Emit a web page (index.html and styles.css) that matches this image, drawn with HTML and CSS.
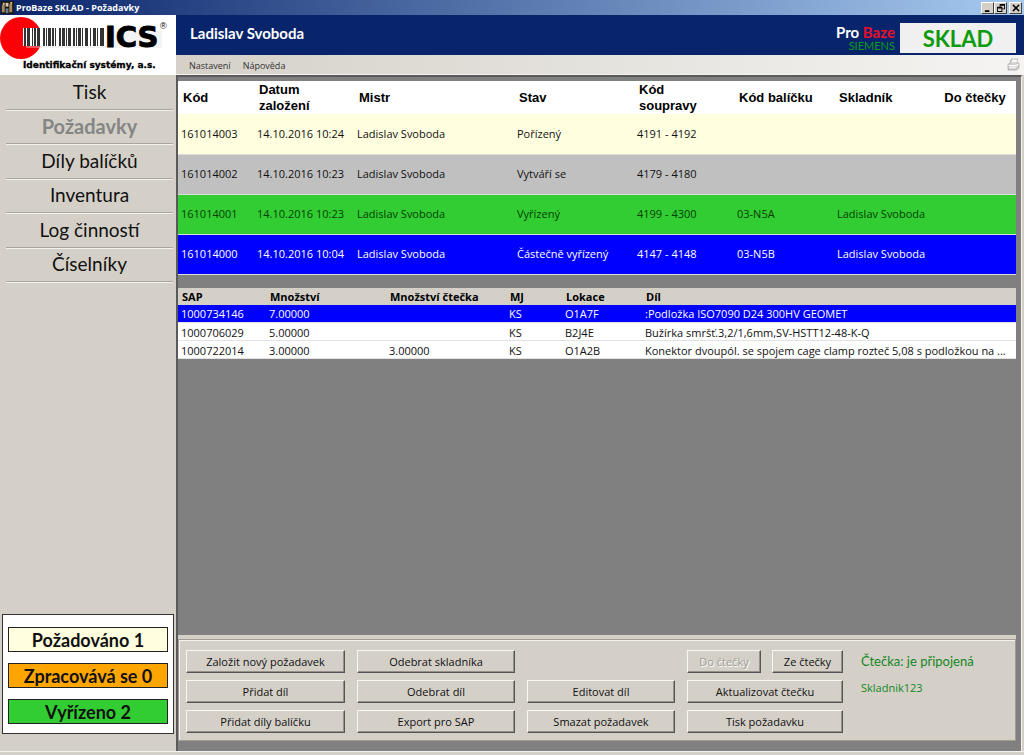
FILE: index.html
```html
<!DOCTYPE html>
<html lang="cs">
<head>
<meta charset="utf-8">
<title>ProBaze SKLAD - Požadavky</title>
<link rel="stylesheet" href="styles.css">
</head>
<body>
<div class="window">
  <header class="titlebar">
    <svg class="app-icon" viewBox="0 0 14 14" aria-hidden="true"><path fill="#1c1a18" d="M0 0h14v14H0z"/><path fill="#a98b5c" d="M1 4h3v8H1zM9 3h3v9H9z"/><path fill="#d8d0bc" d="M5 2h3v4H5z"/><path fill="#6a7d92" d="M5 8h3v5H5z"/><path fill="#e5c98b" d="M2 2h2v2H2zM10 1h2v2h-2z"/></svg>
    <h1 class="window-title">ProBaze SKLAD - Požadavky</h1>
    <div class="window-controls">
      <button class="win-btn" aria-label="Minimalizovat"><svg viewBox="0 0 9 9"><path d="M1 7h5v2H1z"/></svg></button>
      <button class="win-btn" aria-label="Obnovit"><svg viewBox="0 0 9 9"><path d="M3 0h6v6H6v3H0V3h3zM4 2v1h2v2h2V2zM1 5v3h4V5z" fill-rule="evenodd"/></svg></button>
      <button class="win-btn win-close" aria-label="Zavřít"><svg viewBox="0 0 9 9"><path d="M1 1l7 7M8 1L1 8" stroke="#000" stroke-width="1.7"/></svg></button>
    </div>
  </header>
  <div class="frame">
    <aside class="sidebar">
      <div class="logo">
        <svg viewBox="0 0 176 60" role="img" aria-label="ICS Identifikační systémy, a.s.">
          <circle cx="21" cy="23" r="21" fill="#fb0007"/>
          <path d="M26 16h136v17H26z" fill="#e2e2e2" opacity=".4"/>
          <path d="M23 13h84v18H23z" fill="#fff"/>
          <g fill="#333">
            <path d="M24 13h2v18h-2zM27 13h3v18h-3zM32 13h1v18h-1zM34 13h2v18h-2zM37 13h3v18h-3zM43 13h2v18h-2zM46 13h1v18h-1zM48 13h3v18h-3zM52 13h2v18h-2zM55 13h1v18h-1zM59 13h2v18h-2zM62 13h3v18h-3zM66 13h1v18h-1zM68 13h3v18h-3zM73 13h2v18h-2zM76 13h1v18h-1zM78 13h3v18h-3zM82 13h1v18h-1zM85 13h3v18h-3zM90 13h1v18h-1zM93 13h3v18h-3z"/>
            <path d="M97 13h1v18h-1zM100 13h4v18h-4z"/>
          </g>
          <text class="logo-mark" x="105" y="32">ICS</text>
          <text class="logo-name" x="23" y="53">Identifikační systémy, a.s.</text>
          <text class="logo-reg" x="160" y="14">®</text>
        </svg>
      </div>
      <nav class="nav">
        <a href="#">Tisk</a>
        <a href="#" class="current" aria-current="page">Požadavky</a>
        <a href="#">Díly balíčků</a>
        <a href="#">Inventura</a>
        <a href="#">Log činností</a>
        <a href="#">Číselníky</a>
      </nav>
      <div class="counters">
        <div class="counter requested">Požadováno 1</div>
        <div class="counter processing">Zpracovává se 0</div>
        <div class="counter done">Vyřízeno 2</div>
      </div>
    </aside>
    <main class="main">
      <div class="banner">
        <h2 class="user">Ladislav Svoboda</h2>
        <div class="brand"><div class="brand-name">Pro <span class="red">Baze</span></div><div class="brand-sub">SIEMENS</div></div>
        <div class="module">SKLAD</div>
      </div>
      <div class="menubar">
        <button class="menu">Nastavení</button>
        <button class="menu">Nápověda</button>
        <button class="print" aria-label="Tisk"><svg viewBox="0 0 12 12"><path d="M1 6l2-2 1-3h6l-1 3 2 1v4l-2 2H1z" fill="#cfcfcf" stroke="#a6a6a6" stroke-width=".8"/><path d="M4 4h5l.8-2.600H5z" fill="#f8f8f8"/><path d="M1.500 7h7l2-1.500M2 9h6" stroke="#fff" fill="none"/></svg></button>
      </div>
      <div class="workspace">
        <table class="orders">
          <colgroup><col class="w76"><col class="w100"><col class="w160"><col class="w120"><col class="w100"><col class="w100"><col class="w100"><col></colgroup>
          <thead><tr><th>Kód</th><th>Datum<br>založení</th><th>Mistr</th><th>Stav</th><th>Kód<br>soupravy</th><th>Kód balíčku</th><th>Skladník</th><th class="center">Do čtečky</th></tr></thead>
          <tbody>
            <tr class="row-new"><td>161014003</td><td>14.10.2016 10:24</td><td>Ladislav Svoboda</td><td>Pořízený</td><td>4191 - 4192</td><td></td><td></td><td></td></tr>
            <tr class="row-draft"><td>161014002</td><td>14.10.2016 10:23</td><td>Ladislav Svoboda</td><td>Vytváří se</td><td>4179 - 4180</td><td></td><td></td><td></td></tr>
            <tr class="row-done"><td>161014001</td><td>14.10.2016 10:23</td><td>Ladislav Svoboda</td><td>Vyřízený</td><td>4199 - 4300</td><td>03-N5A</td><td>Ladislav Svoboda</td><td></td></tr>
            <tr class="row-selected"><td>161014000</td><td>14.10.2016 10:04</td><td>Ladislav Svoboda</td><td>Částečně vyřízený</td><td>4147 - 4148</td><td>03-N5B</td><td>Ladislav Svoboda</td><td></td></tr>
          </tbody>
        </table>
        <table class="parts">
          <colgroup><col class="w88"><col class="w120"><col class="w120"><col class="w56"><col class="w80"><col></colgroup>
          <thead><tr><th>SAP</th><th>Množství</th><th>Množství čtečka</th><th>MJ</th><th>Lokace</th><th>Díl</th></tr></thead>
          <tbody>
            <tr class="row-selected"><td>1000734146</td><td>7.00000</td><td></td><td>KS</td><td>O1A7F</td><td>:Podložka ISO7090 D24 300HV GEOMET</td></tr>
            <tr><td>1000706029</td><td>5.00000</td><td></td><td>KS</td><td>B2J4E</td><td>Bužírka smršť.3,2/1,6mm,SV-HSTT12-48-K-Q</td></tr>
            <tr><td>1000722014</td><td>3.00000</td><td>3.00000</td><td>KS</td><td>O1A2B</td><td>Konektor dvoupól. se spojem cage clamp rozteč 5,08 s podložkou na ...</td></tr>
          </tbody>
        </table>
        <section class="actions">
          <div class="actions-box">
            <div class="stack col-a"><button class="btn">Založit nový požadavek</button><button class="btn">Přidat díl</button><button class="btn">Přidat díly balíčku</button></div>
            <div class="stack col-d"><button class="btn">Odebrat skladníka</button><button class="btn">Odebrat díl</button><button class="btn">Export pro SAP</button></div>
            <div class="stack col-b"><button class="btn">Editovat díl</button><button class="btn">Smazat požadavek</button></div>
            <div class="stack col-c"><div class="pair"><button class="btn" disabled>Do čtečky</button><button class="btn">Ze čtečky</button></div><button class="btn">Aktualizovat čtečku</button><button class="btn">Tisk požadavku</button></div>
            <div class="reader"><p class="reader-state">Čtečka: je připojená</p><p class="reader-name">Skladnik123</p></div>
          </div>
        </section>
      </div>
    </main>
  </div>
  <footer class="statusbar"></footer>
</div>
</body>
</html>
```
FILE: styles.css
```css
* { box-sizing: border-box; }

body {
  margin: 0;
  background: #d4d0c8;
  color: #111;
  font: 11px/14px "Open Sans", "Liberation Sans", sans-serif;
}

button { font: inherit; color: inherit; }

.window { display: flex; flex-direction: column; min-height: 100vh; }

.titlebar {
  display: flex;
  align-items: center;
  gap: 2px;
  height: 15px;
  padding: 0 2px 0 1px;
  background: linear-gradient(90deg, #0a246a, #a6caf0);
}
.app-icon { width: 13px; height: 13px; }
.window-title { flex: 1; margin: 0; color: #fff; font: bold 9px/14px "Open Sans", sans-serif; }
.window-controls { display: flex; }
.win-btn {
  display: grid;
  place-items: center;
  width: 13px;
  height: 12px;
  padding: 0;
  background: #d4d0c8;
  border: 1px solid;
  border-color: #fff #404040 #404040 #fff;
}
.win-btn svg { width: 8px; height: 8px; }
.win-close { margin-left: 2px; }

.frame { display: flex; flex: 1; }

.sidebar { display: flex; flex-direction: column; width: 176px; font-family: Lato, sans-serif; }
.logo { height: 60px; background: #fff; }
.logo svg { display: block; width: 176px; height: 60px; }
.logo-mark { font: bold 29px "DejaVu Sans", sans-serif; stroke: #000; stroke-width: 1px; }
.logo-name { font: bold 9px "DejaVu Sans", sans-serif; stroke: #000; stroke-width: .3px; }
.logo-reg { font: 9px "Liberation Sans", sans-serif; }

.nav { display: grid; grid-auto-rows: 1fr; height: 207px; padding: 0 3px 0 6px; }
.nav a {
  display: grid;
  place-items: center;
  border-bottom: 1px solid #aaa69f;
  box-shadow: 0 1px #f4f2ee;
  color: #111;
  font-size: 19px;
  line-height: 24px;
  text-decoration: none;
}
.nav .current { color: #858585; font-size: 20px; font-weight: bold; }

.counters {
  display: grid;
  gap: 11px;
  margin: auto 2px 17px;
  padding: 12px 5px 9px;
  background: #fff;
  border: 1px solid #333;
}
.counter { height: 25px; border: 1px solid #222; font-size: 18px; font-weight: bold; line-height: 25px; text-align: center; }
.requested { background: #ffffe0; }
.processing { background: #ffa500; }
.done { background: #32cd32; }

.main { display: flex; flex: 1; flex-direction: column; min-width: 0; }

.banner { display: flex; align-items: center; height: 40px; padding: 0 8px 0 14px; background: #08246b; color: #fff; font-family: Lato, sans-serif; }
.user { flex: 1; margin: 0; padding-bottom: 4px; font-size: 15px; line-height: 20px; }
.brand { margin-right: 5px; text-align: right; }
.brand-name { padding-top: 6px; font-size: 15px; font-weight: bold; line-height: 15px; }
.red { color: #e8102c; }
.brand-sub { color: #0d9c1d; line-height: 12px; }
.module { width: 116px; margin-top: 6px; padding-top: 1px; background: #f0f0f0; color: #0c9b0c; font-size: 22px; font-weight: bold; line-height: 29px; text-align: center; }

.menubar { display: flex; align-items: center; height: 20px; padding: 0 3px 0 13px; background: linear-gradient(90deg, #d5d1c9, #f5f4f2); border-bottom: 1px solid #f4f2ee; }
.menu { margin-right: 12px; padding: 3px 0 0; background: none; border: 0; color: #333; font: 9px/14px "Open Sans", sans-serif; }
.print { width: 14px; height: 14px; margin-left: auto; padding: 0; background: none; border: 0; }
.print svg { display: block; width: 13px; height: 13px; }

.workspace {
  display: flex;
  flex: 1;
  flex-direction: column;
  margin-right: 2px;
  padding: 4px 5px 10px 0;
  background: #808080;
  border-top: 2px solid #5a5a5a;
  border-left: 2px solid #5a5a5a;
  border-right: 1px solid #f4f2ee;
}

table { width: 100%; border-collapse: collapse; table-layout: fixed; }
th, td { padding: 0 3px; text-align: left; white-space: nowrap; }
.w56 { width: 56px; }
.w76 { width: 76px; }
.w80 { width: 80px; }
.w88 { width: 88px; }
.w100 { width: 100px; }
.w120 { width: 120px; }
.w160 { width: 160px; }

.orders { margin-bottom: 13px; background: #fff; }
.orders th { height: 33px; padding: 0 5px; color: #000; font: bold 13px/16px "Liberation Sans", sans-serif; }
.orders .center { text-align: center; }
.orders td { height: 40px; border-bottom: 1px solid #dcdcdc; }
.row-new { background: #ffffe0; }
.row-draft { background: #c0c0c0; }
.row-done { background: #32cd32; color: #063d06; }
.row-selected { background: #00f; color: #fff; }

.parts { background: #fff; }
.parts th { height: 17px; padding: 1px 4px 0; background: #d4d0c8; color: #000; }
.parts td { height: 18px; padding-top: 2px; border-bottom: 1px solid #e2e2e2; }

.actions { margin-top: auto; padding-top: 4px; background: #d4d0c8; }
.actions-box { display: flex; gap: 12px; padding: 10px 8px 7px 7px; border: 1px solid #a09c94; box-shadow: inset 1px 1px #f4f2ee; }
.stack { display: flex; flex-direction: column; justify-content: flex-end; gap: 7px; }
.col-a { width: 159px; }
.col-b { width: 148px; }
.col-c { width: 156px; }
.col-d { width: 158px; }
.pair { display: grid; grid-template-columns: 74px 71px; justify-content: space-between; }
.btn {
  height: 23px;
  padding: 0;
  background: #d4d0c8;
  border: 1px solid;
  border-color: #f8f7f4 #555 #555 #f8f7f4;
  box-shadow: inset -1px -1px #96928a;
}
.btn:disabled { color: #a09c94; text-shadow: 1px 1px #fff; }
.reader { margin-left: 6px; color: #15861e; }
.reader p { margin: 0; }
.reader .reader-state { margin: 4px 0 12px; font: 13px/15px Lato, sans-serif; }

.statusbar { height: 4px; border-top: 1px solid #f4f2ee; }
```
